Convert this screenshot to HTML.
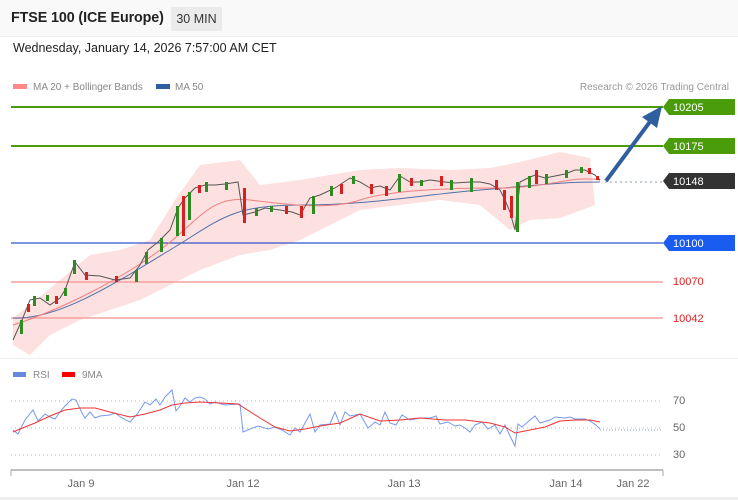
<!DOCTYPE html>
<html><head><meta charset="utf-8"><style>
body{margin:0;width:738px;height:500px;background:#fff;font-family:"Liberation Sans",sans-serif;overflow:hidden;position:relative}
.hdr{position:absolute;left:0;top:0;width:738px;height:36px;background:#f9f9f9}
.t{position:absolute;left:11px;top:10px;font-size:14.3px;font-weight:bold;color:#222;letter-spacing:-0.1px}
.tf{position:absolute;left:171px;top:7px;width:51px;height:24px;background:#ebebeb;font-size:12.5px;color:#333;text-align:center;line-height:24px}
.d{position:absolute;left:13px;top:41px;font-size:12.5px;color:#222}
</style></head><body>
<div class="hdr"></div><div class="t">FTSE 100 (ICE Europe)</div><div class="tf">30 MIN</div>
<div class="d">Wednesday, January 14, 2026 7:57:00 AM CET</div>
<svg width="738" height="500" style="position:absolute;left:0;top:0" font-family="Liberation Sans, sans-serif">
<rect x="0" y="36" width="738" height="1" fill="#eee"/>
<rect x="13" y="84" width="14" height="5" fill="#f88"/><text x="33" y="90" font-size="10" fill="#888">MA 20 + Bollinger Bands</text>
<rect x="156" y="84" width="14" height="5" fill="#2f5f9f"/><text x="175" y="90" font-size="10" fill="#888">MA 50</text>
<text x="729" y="90" font-size="10" fill="#999" text-anchor="end">Research © 2026 Trading Central</text>
<path d="M13,318 L30,305 60,280 90,255 120,250 150,240 175,200 200,165 240,160 260,185 300,180 330,175 360,170 400,168 450,170 490,168 520,162 560,152 590,158 L595,205 560,218 530,220 510,230 480,205 440,200 400,205 360,210 330,225 300,240 270,250 240,255 200,270 170,285 140,300 110,310 80,320 50,335 30,355 13,345 Z" fill="#fde0e0"/>
<line x1="11" y1="107" x2="663" y2="107" stroke="#4a9c0a" stroke-width="2"/>
<line x1="11" y1="146" x2="663" y2="146" stroke="#4a9c0a" stroke-width="2"/>
<line x1="11" y1="243" x2="663" y2="243" stroke="#3355cc" stroke-width="1.2"/>
<line x1="11" y1="282" x2="663" y2="282" stroke="#f5a0a0" stroke-width="1.5"/>
<line x1="11" y1="318" x2="663" y2="318" stroke="#f5a0a0" stroke-width="1.5"/>
<line x1="605" y1="182" x2="663" y2="182" stroke="#8899bb" stroke-dasharray="2,3"/>
<path d="M13,318 C60,320 120,280 170,250 S230,205 300,205 S420,195 480,190 S560,182 600,182" fill="none" stroke="#5070a8" stroke-width="1"/>
<path d="M13,325 C60,310 120,280 160,250 S210,195 250,200 S330,210 360,200 S450,188 500,188 S570,175 600,180" fill="none" stroke="#f08080" stroke-width="1"/>
<path d="M13,340 L22,320 30,300 40,298 50,305 60,298 65,290 75,262 85,275 100,276 115,280 130,278 140,265 148,250 158,242 170,230 178,208 185,198 195,188 205,185 215,185 225,184 238,182 243,215 255,212 265,208 280,210 292,212 300,215 310,198 320,195 335,188 350,178 360,182 370,188 380,186 390,190 400,176 410,182 420,182 430,180 445,182 455,183 470,182 480,182 490,184 500,190 505,200 510,212 515,230 520,182 528,178 535,175 545,178 555,176 565,174 575,170 585,170 595,175 600,180" fill="none" stroke="#555" stroke-width="1"/>
<g fill="#2e8b20">
<rect x="20" y="320" width="3" height="14"/><rect x="33" y="296" width="3" height="10"/><rect x="46" y="295" width="3" height="6"/><rect x="64" y="288" width="3" height="8"/><rect x="73" y="260" width="3" height="14"/><rect x="135" y="270" width="3" height="12"/><rect x="145" y="252" width="3" height="12"/><rect x="160" y="238" width="3" height="14"/><rect x="176" y="206" width="3" height="30"/><rect x="188" y="192" width="3" height="28"/><rect x="205" y="182" width="3" height="10"/><rect x="225" y="182" width="3" height="8"/><rect x="255" y="208" width="3" height="8"/><rect x="270" y="206" width="3" height="6"/><rect x="312" y="196" width="3" height="18"/><rect x="330" y="186" width="3" height="10"/><rect x="352" y="176" width="3" height="8"/><rect x="398" y="174" width="3" height="18"/><rect x="420" y="180" width="3" height="6"/><rect x="450" y="180" width="3" height="10"/><rect x="470" y="178" width="3" height="14"/><rect x="516" y="182" width="3" height="50"/><rect x="528" y="176" width="3" height="12"/><rect x="545" y="174" width="3" height="10"/><rect x="565" y="170" width="3" height="8"/><rect x="580" y="167" width="3" height="6"/>
</g>
<g fill="#d82020">
<rect x="27" y="304" width="3" height="8"/><rect x="55" y="296" width="3" height="8"/><rect x="85" y="272" width="3" height="8"/><rect x="115" y="276" width="3" height="6"/><rect x="182" y="196" width="3" height="40"/><rect x="198" y="185" width="3" height="8"/><rect x="243" y="188" width="3" height="35"/><rect x="285" y="206" width="3" height="8"/><rect x="300" y="206" width="3" height="12"/><rect x="340" y="184" width="3" height="10"/><rect x="370" y="184" width="3" height="10"/><rect x="385" y="186" width="3" height="10"/><rect x="410" y="178" width="3" height="8"/><rect x="440" y="176" width="3" height="10"/><rect x="495" y="180" width="3" height="10"/><rect x="503" y="190" width="3" height="20"/><rect x="510" y="196" width="3" height="22"/><rect x="535" y="170" width="3" height="14"/><rect x="588" y="168" width="3" height="6"/><rect x="596" y="176" width="3" height="4"/>
</g>
<line x1="606" y1="181" x2="652" y2="119" stroke="#2f5f9f" stroke-width="4"/>
<polygon points="662,106 657,128 642,117" fill="#2f5f9f"/>
<polygon points="663,107 669,99 735,99 735,115 669,115" fill="#4a9c0a"/><text x="673" y="111" font-size="11" fill="#fff">10205</text>
<polygon points="663,146 669,138 735,138 735,154 669,154" fill="#4a9c0a"/><text x="673" y="150" font-size="11" fill="#fff">10175</text>
<polygon points="663,181 669,173 735,173 735,189 669,189" fill="#333"/><text x="673" y="185" font-size="11" fill="#fff">10148</text>
<polygon points="663,243 669,235 735,235 735,251 669,251" fill="#1a5cf0"/><text x="673" y="247" font-size="11" fill="#fff">10100</text>
<text x="673" y="285" font-size="11" fill="#e02020">10070</text>
<text x="673" y="322" font-size="11" fill="#e02020">10042</text>
<rect x="0" y="358" width="738" height="1" fill="#f0f0f0"/>
<rect x="13" y="372" width="13" height="5" fill="#6688dd"/><text x="33" y="378" font-size="10" fill="#888">RSI</text>
<rect x="62" y="372" width="13" height="5" fill="#f00"/><text x="82" y="378" font-size="10" fill="#888">9MA</text>
<g stroke="#bbb" stroke-dasharray="1,3"><line x1="11" y1="401" x2="663" y2="401"/><line x1="11" y1="428" x2="663" y2="428"/><line x1="11" y1="455" x2="663" y2="455"/></g>
<line x1="600" y1="430" x2="663" y2="430" stroke="#8899cc" stroke-dasharray="1,2"/>
<text x="673" y="404" font-size="11" fill="#666">70</text><text x="673" y="431" font-size="11" fill="#666">50</text><text x="673" y="458" font-size="11" fill="#666">30</text>
<path d="M13,430 L18,434 25,420 33,410 38,421 45,414 50,417 55,419 60,412 65,406 72,399 76,400 82,413 85,418 90,412 95,418 100,416 110,415 115,413 122,418 130,422 138,413 145,402 150,405 156,399 160,405 165,397 172,390 176,411 180,406 185,398 190,402 195,398 200,397 205,399 210,404 215,402 225,405 240,404 243,432 250,429 258,426 268,429 275,427 282,430 290,435 295,428 300,432 310,414 315,432 320,425 330,424 335,412 340,425 345,412 350,416 360,414 368,428 375,422 380,425 385,412 390,423 396,425 402,415 410,420 420,418 430,418 436,416 440,424 448,422 455,426 460,425 465,428 470,432 475,425 482,422 488,429 495,425 500,434 505,425 510,436 515,446 518,424 522,427 530,420 535,416 540,423 550,420 555,417 565,418 570,417 575,419 580,419 585,419 590,421 596,425 600,429" fill="none" stroke="#7799ee" stroke-width="1"/>
<path d="M13,432 L25,427 35,423 50,416 65,410 80,408 95,408 110,412 130,417 145,414 160,410 172,405 185,403 200,402 220,403 238,404 260,418 275,427 290,431 305,429 320,426 340,423 360,414 380,421 400,420 420,418 445,420 465,420 490,423 505,427 515,433 530,430 545,427 560,421 575,420 590,420 600,422" fill="none" stroke="#ee3333" stroke-width="1"/>
<line x1="11" y1="470" x2="663" y2="470" stroke="#aaa" stroke-width="1.5"/>
<line x1="11" y1="470" x2="11" y2="476" stroke="#aaa"/><line x1="663" y1="470" x2="663" y2="476" stroke="#aaa"/>
<g font-size="11" fill="#666" text-anchor="middle"><text x="81" y="487">Jan 9</text><text x="243" y="487">Jan 12</text><text x="404" y="487">Jan 13</text><text x="566" y="487">Jan 14</text><text x="633" y="487">Jan 22</text></g>
<rect x="0" y="497" width="738" height="3" fill="#eee"/>
</svg>
</body></html>
